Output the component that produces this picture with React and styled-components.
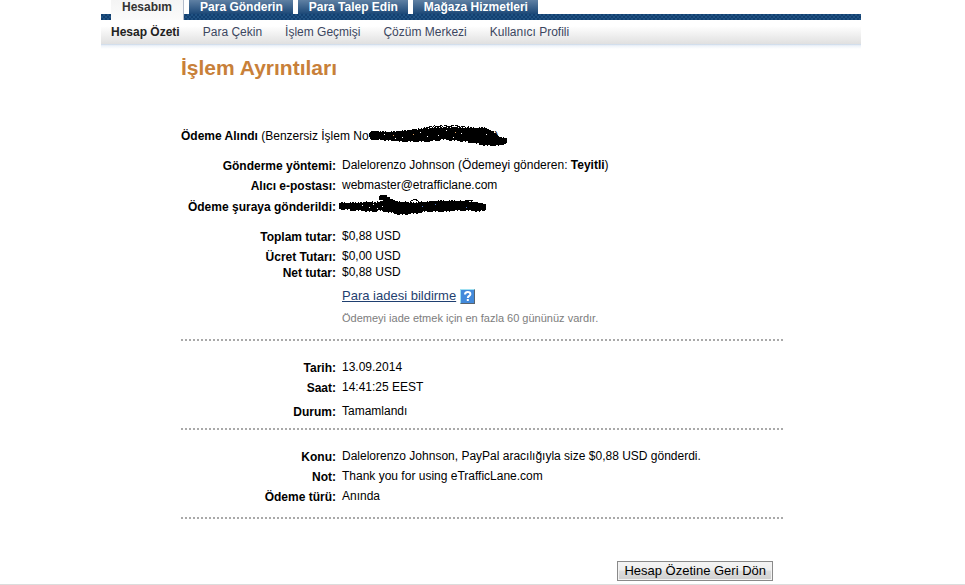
import React from 'react';
import styled, { createGlobalStyle } from 'styled-components';

const GlobalStyle = createGlobalStyle`
  body {
    margin: 0;
    background: #ffffff;
    color: #000000;
    font-family: 'Liberation Sans', Arial, sans-serif;
    font-size: 12px;
    line-height: 16px;
  }
`;

// Page shell
const Page = styled.div`
  box-sizing: border-box;
  min-height: 100vh;
  padding-right: 3px;
  border-bottom: 1px solid #dcdcdc;
`;

const Container = styled.div`
  max-width: 760px;
  margin: 0 auto;
`;

// Navigation
const TabBar = styled.nav`
  display: flex;
  height: 20px;
  padding-left: 10px;
  background: linear-gradient(#ffffff, #ffffff) top / 100% 14px no-repeat,
    repeating-conic-gradient(#123f70 0 25%, #205282 0 50%) 0 0 / 4px 4px;
`;

const Tab = styled.a`
  box-sizing: border-box;
  height: 14px;
  padding: 0 10px 0 11px;
  margin-right: 5px;
  font-weight: bold;
  line-height: 15px;
  color: #ffffff;
  text-decoration: none;
  white-space: nowrap;
  background: linear-gradient(#5f80a3, #1c4877);
`;

const ActiveTab = styled(Tab)`
  height: 20px;
  padding-right: 11px;
  line-height: 14px;
  color: #333333;
  background: linear-gradient(#f4f4f4, #fbfbfb);
  border-right: 1px solid #b4bccb;
`;

const SubNav = styled.nav`
  display: flex;
  gap: 23px;
  height: 24px;
  padding-left: 10px;
  line-height: 24px;
  background: linear-gradient(#ffffff 25%, #e0e0e0);
`;

const SubLink = styled.a`
  font-weight: ${props => (props.$active ? 'bold' : 'normal')};
  color: ${props => (props.$active ? '#222222' : '#3b4660')};
  text-decoration: none;
  white-space: nowrap;
`;

const NavShadow = styled.div`
  height: 5px;
  background: linear-gradient(#c8d6e8, #eef3f9 35%, #ffffff);
`;

// Content
const Content = styled.main`
  margin: 0 78px 0 80px;
`;

const Title = styled.h1`
  margin: 0;
  padding: 6px 0 44px;
  font-size: 21px;
  line-height: 26px;
  color: #c88039;
`;

const Summary = styled.p`
  display: flex;
  align-items: center;
  height: 22px;
  margin: 0 0 10px;
  white-space: pre;
`;

const Details = styled.dl`
  margin: 0;
`;

const Row = styled.div`
  display: grid;
  grid-template-columns: 155px 1fr;
  column-gap: 6px;
  height: 16px;
  margin-bottom: ${props => props.$space ?? 4}px;
`;

const Label = styled.dt`
  font-weight: bold;
  line-height: 18px;
  text-align: right;
  white-space: nowrap;
`;

const Value = styled.dd`
  display: flex;
  align-items: center;
  height: 16px;
  margin: 0;
  white-space: nowrap;
`;

const RefundLink = styled.a`
  font-size: 13px;
  color: #1f3f70;
`;

const HelpButton = styled.button`
  display: flex;
  width: 15px;
  height: 15px;
  margin-left: 4px;
  padding: 0;
  border: 1px solid;
  border-color: #9fe0f2 #59646e #59646e #9fe0f2;
  background: #438adb;
`;

const Hint = styled.span`
  font-size: 11px;
  color: #7d7d7d;
`;

const Divider = styled.hr`
  height: 2px;
  margin: ${props => props.$top}px 0 ${props => props.$bottom}px;
  border: 0;
  background: repeating-linear-gradient(90deg, #a9a9a9 0, #a9a9a9 2px, #ffffff 2px, #ffffff 4px);
`;

const Actions = styled.div`
  display: flex;
  justify-content: flex-end;
  padding: 0 10px 3px 0;
`;

const BackButton = styled.button`
  height: 20px;
  padding: 0 6px;
  border: 1px solid #8a8a8a;
  background: linear-gradient(#f4f4f4 0, #eeeeee 45%, #dddddd 50%, #cfcfcf);
  box-shadow: inset 0 0 0 1px #f3f3f3;
  font-family: inherit;
  font-size: 13px;
  line-height: 16px;
  color: #000000;
`;

const Scribble = styled.svg`
  flex: none;
  overflow: visible;
`;

const IdScribble = styled(Scribble)`
  margin-right: -13px;
`;

const EmailScribble = styled(Scribble)`
  margin-left: -3px;
`;

// Outline points of the marker strokes: [x, top, bottom, roughness]
const idStroke = [
  [0, 8, 12, 0], [2, 6, 15, 0], [10, 6, 15, 1], [20, 6, 16, 1], [35, 5, 17, 1],
  [47, 3, 17, 2], [58, 1, 17, 3], [74, 0, 15, 3], [86, 0, 16, 3], [96, 1, 17, 2],
  [108, 2, 19, 1], [116, 2, 21, 1], [124, 6, 21, 1], [130, 11, 21, 1], [138, 13, 18, 1],
];
const emailStroke = [
  [0, 9, 15, 0], [3, 8, 16, 1], [18, 8, 17, 1], [34, 7, 18, 2], [40, 7, 17, 1],
  [52, 5, 19, 1], [60, 7, 21, 1], [76, 8, 20, 1], [86, 7, 18, 1], [100, 6, 18, 1],
  [120, 6, 17, 1], [132, 7, 17, 1], [140, 8, 18, 1], [147, 10, 16, 0],
];

function strokePath(points) {
  let d = '';
  for (let i = 0; i < points.length - 1; i++) {
    const [x0, t0, b0, rough] = points[i];
    const [x1, t1, b1] = points[i + 1];
    for (let x = x0; x < x1; x++) {
      const k = (x - x0) / (x1 - x0);
      const noise = (x * 7 + x * x * 3) % 11;
      const top = Math.round(t0 + (t1 - t0) * k + (noise / 11) * rough);
      const bottom = Math.round(b0 + (b1 - b0) * k - ((noise * 5) % 2) * Math.min(rough, 1));
      d += `M${x} ${top}h1V${bottom}h-1z`;
      // loose specks above the rough parts
      if (rough > 2 && noise > 6) d += `M${x} ${top - 2}h1v1h-1z`;
    }
  }
  return d;
}

const subLinks = ['Para Çekin', 'İşlem Geçmişi', 'Çözüm Merkezi', 'Kullanıcı Profili'];

export default function App() {
  return (
    <Page>
      <GlobalStyle />
      <Container>
        <TabBar>
          <ActiveTab href="#hesabim">Hesabım</ActiveTab>
          <Tab href="#gonder">Para Gönderin</Tab>
          <Tab href="#talep">Para Talep Edin</Tab>
          <Tab href="#magaza">Mağaza Hizmetleri</Tab>
        </TabBar>
        <SubNav>
          <SubLink href="#ozet" $active>Hesap Özeti</SubLink>
          {subLinks.map(text => (
            <SubLink key={text} href="#nav">{text}</SubLink>
          ))}
        </SubNav>
        <NavShadow />

        <Content>
          <Title>İşlem Ayrıntıları</Title>
          <Summary>
            <strong>Ödeme Alındı</strong> (Benzersiz İşlem No
            <IdScribble width="139" height="22" shapeRendering="crispEdges" aria-hidden="true">
              <path d={strokePath(idStroke)} />
              <path d="M15 9h1M33 12h1M51 7h1M69 10h1M77 5h1M92 8h1M117 9h1M26 13h1M58 11h1M84 12h1" stroke="#ffffff" />
              <path d="M24 10h1M44 9h1M86 7h1" stroke="#e0a060" />
            </IdScribble>
            )
          </Summary>

          <Details>
            <Row>
              <Label>Gönderme yöntemi:</Label>
              <Value>
                <span>Dalelorenzo Johnson (Ödemeyi gönderen: <strong>Teyitli</strong>)</span>
              </Value>
            </Row>
            <Row $space={5}>
              <Label>Alıcı e-postası:</Label>
              <Value>webmaster@etrafficlane.com</Value>
            </Row>
            <Row $space={14}>
              <Label>Ödeme şuraya gönderildi:</Label>
              <Value>
                <EmailScribble width="148" height="24" shapeRendering="crispEdges" aria-hidden="true">
                  <path d={strokePath(emailStroke)} />
                  <path d="M41 1h7v2h3v2h3v2h3v3h-13v-4h-4V2h1z" />
                  <path d="M71 8q5-5 9 0M126 6h8" fill="none" stroke="#000000" />
                  <path d="M23 11h1M30 13h1M34 10h1M38 14h1M43 12h1" stroke="#ffffff" />
                  <path d="M83 12h1M96 10h1M127 13h1" stroke="#4d79c7" />
                </EmailScribble>
              </Value>
            </Row>
            <Row>
              <Label>Toplam tutar:</Label>
              <Value>$0,88 USD</Value>
            </Row>
            <Row $space={0}>
              <Label>Ücret Tutarı:</Label>
              <Value>$0,00 USD</Value>
            </Row>
            <Row $space={8}>
              <Label>Net tutar:</Label>
              <Value>$0,88 USD</Value>
            </Row>
            <Row $space={6}>
              <Label />
              <Value>
                <RefundLink href="#iade">Para iadesi bildirme</RefundLink>
                <HelpButton type="button" aria-label="Yardım">
                  <svg width="13" height="13" viewBox="0 0 13 13" aria-hidden="true">
                    <path d="M4 4.5q0-2.5 2.7-2.5t2.7 2.2c0 1.8-2.6 1.6-2.6 3.8" fill="none" stroke="#ffffff" strokeWidth="2" />
                    <path d="M5.8 9h2v2h-2z" fill="#ffffff" />
                  </svg>
                </HelpButton>
              </Value>
            </Row>
            <Row $space={0}>
              <Label />
              <Value>
                <Hint>Ödemeyi iade etmek için en fazla 60 gününüz vardır.</Hint>
              </Value>
            </Row>
          </Details>

          <Divider $top={13} $bottom={18} />

          <Details>
            <Row>
              <Label>Tarih:</Label>
              <Value>13.09.2014</Value>
            </Row>
            <Row $space={8}>
              <Label>Saat:</Label>
              <Value>14:41:25 EEST</Value>
            </Row>
            <Row $space={0}>
              <Label>Durum:</Label>
              <Value>Tamamlandı</Value>
            </Row>
          </Details>

          <Divider $top={9} $bottom={18} />

          <Details>
            <Row>
              <Label>Konu:</Label>
              <Value>Dalelorenzo Johnson, PayPal aracılığıyla size $0,88 USD gönderdi.</Value>
            </Row>
            <Row>
              <Label>Not:</Label>
              <Value>Thank you for using eTrafficLane.com</Value>
            </Row>
            <Row $space={0}>
              <Label>Ödeme türü:</Label>
              <Value>Anında</Value>
            </Row>
          </Details>

          <Divider $top={13} $bottom={42} />

          <Actions>
            <BackButton type="button">Hesap Özetine Geri Dön</BackButton>
          </Actions>
        </Content>
      </Container>
    </Page>
  );
}
